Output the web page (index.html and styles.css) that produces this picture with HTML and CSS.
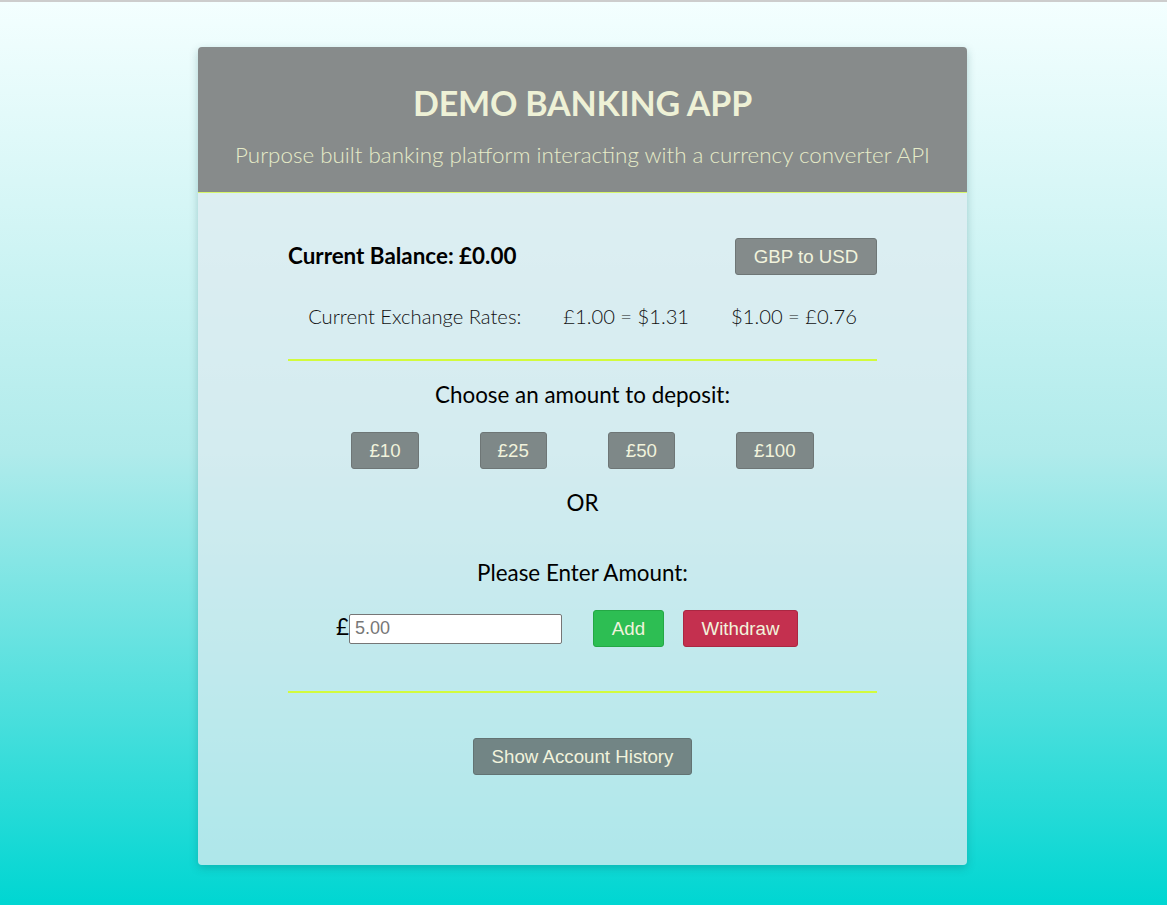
FILE: index.html
```html
<!DOCTYPE html>
<html lang="en">
<head>
<meta charset="utf-8">
<title>Demo Banking App</title>
<link rel="stylesheet" href="styles.css">
</head>
<body>
<div class="topline"></div>
<main class="page">
  <section class="card">
    <header class="card-header">
      <h1 class="title">DEMO BANKING APP</h1>
      <p class="subtitle">Purpose built banking platform interacting with a currency converter API</p>
    </header>
    <div class="card-body">
      <div class="balance-row">
        <h2 class="balance">Current Balance: £0.00</h2>
        <button class="btn btn-grey btn-convert">GBP to USD</button>
      </div>
      <div class="rates-row">
        <span>Current Exchange Rates:</span>
        <span>£1.00 = $1.31</span>
        <span>$1.00 = £0.76</span>
      </div>
      <hr class="divider">
      <p class="label">Choose an amount to deposit:</p>
      <div class="quick-row">
        <button class="btn btn-grey">£10</button>
        <button class="btn btn-grey">£25</button>
        <button class="btn btn-grey">£50</button>
        <button class="btn btn-grey">£100</button>
      </div>
      <p class="label or">OR</p>
      <p class="label enter">Please Enter Amount:</p>
      <div class="amount-row">
        <label class="amount-field"><span class="pound">£</span><input class="amount-input" type="text" placeholder="5.00"></label>
        <button class="btn btn-green">Add</button>
        <button class="btn btn-red">Withdraw</button>
      </div>
      <hr class="divider divider-2">
      <div class="history-row">
        <button class="btn btn-history">Show Account History</button>
      </div>
    </div>
  </section>
</main>
</body>
</html>
```
FILE: styles.css
```css
html, body {
  margin: 0;
  padding: 0;
  height: 100%;
}
body {
  background: linear-gradient(to bottom, #f4ffff 0%, #b0ebeb 50%, #00d6d2 100%);
  font-family: "Lato", "Liberation Sans", sans-serif;
  min-height: 905px;
}
.topline {
  height: 2px;
  background: #cdcdcd;
}
.page {
  display: flex;
  justify-content: center;
  padding-top: 45px;
  padding-right: 2px;
}
.card {
  width: 769px;
  height: 818px;
  border-radius: 4px;
  overflow: hidden;
  background: rgba(222, 236, 241, 0.77);
  box-shadow: 0 3px 8px rgba(0, 80, 80, 0.25);
  display: flex;
  flex-direction: column;
}
.card-header {
  background: #878b8b;
  height: 146px;
  box-sizing: border-box;
  border-bottom: 1px solid #d6f56a;
  text-align: center;
  padding-top: 36px;
}
.title {
  margin: 0;
  font-size: 34px;
  font-weight: 700;
  color: #eef1d6;
  line-height: 40px;
  letter-spacing: -0.2px;
}
.subtitle {
  margin: 18px 0 0;
  font-size: 22.4px;
  font-weight: 300;
  color: #e6ebc8;
  line-height: 28px;
}
.card-body {
  padding: 0 90px;
  display: flex;
  flex-direction: column;
}
.balance-row {
  display: flex;
  justify-content: space-between;
  align-items: center;
  margin-top: 45px;
  height: 37px;
}
.balance {
  margin: 0;
  font-size: 22.4px;
  font-weight: 700;
  color: #000;
  position: relative;
  top: -1px;
}
.btn {
  font-family: "Liberation Sans", Arial, sans-serif;
  font-size: 18.7px;
  line-height: 21px;
  padding: 7px 18px;
  border-radius: 3px;
  border: 1px solid #6e7676;
  color: #f1f3dc;
  cursor: pointer;
}
.btn-grey {
  background: #7e8888;
}
.btn-convert {
  width: 142px;
  height: 37px;
  padding: 0;
  background: #848b8b;
}
.rates-row {
  display: flex;
  justify-content: center;
  gap: 42px;
  margin-top: 28px;
  font-size: 20.2px;
  font-weight: 300;
  color: #111;
  line-height: 26px;
}
.divider {
  border: none;
  height: 2px;
  background: #d2fb3c;
  margin: 30px 0 0;
}
.label {
  margin: 0;
  text-align: center;
  font-size: 22.4px;
  color: #000;
  line-height: 28px;
}
.divider + .label {
  margin-top: 20px;
}
.quick-row {
  display: flex;
  justify-content: center;
  gap: 61px;
  margin-top: 23px;
}
.quick-row .btn {
  height: 37px;
  padding: 0 17px;
}
.or {
  margin-top: 20px;
}
.enter {
  margin-top: 42px;
}
.amount-row {
  display: flex;
  justify-content: center;
  align-items: center;
  margin-top: 23px;
}
.amount-field {
  display: flex;
  align-items: center;
  margin-left: -31px;
}
.pound {
  font-size: 22.4px;
  color: #000;
  position: relative;
  top: -2px;
}
.amount-input {
  width: 213px;
  height: 30px;
  box-sizing: border-box;
  border: 1px solid #767676;
  border-radius: 2px;
  background: #fff;
  font-family: "Liberation Sans", Arial, sans-serif;
  font-size: 18px;
  padding: 0 5px;
  margin: 0;
}
.amount-input::placeholder {
  color: #777;
}
.btn-green {
  background: #2dbe53;
  border-color: #24a845;
  margin-left: 31px;
  width: 71px;
  height: 37px;
  padding: 0;
}
.btn-red {
  background: #c4304f;
  border-color: #aa2742;
  margin-left: 19px;
  width: 115px;
  height: 37px;
  padding: 0;
}
.divider-2 {
  margin-top: 44px;
}
.history-row {
  display: flex;
  justify-content: center;
  margin-top: 45px;
}
.btn-history {
  background: #728585;
  border-color: #627373;
  width: 219px;
  height: 37px;
  padding: 0;
}
```
